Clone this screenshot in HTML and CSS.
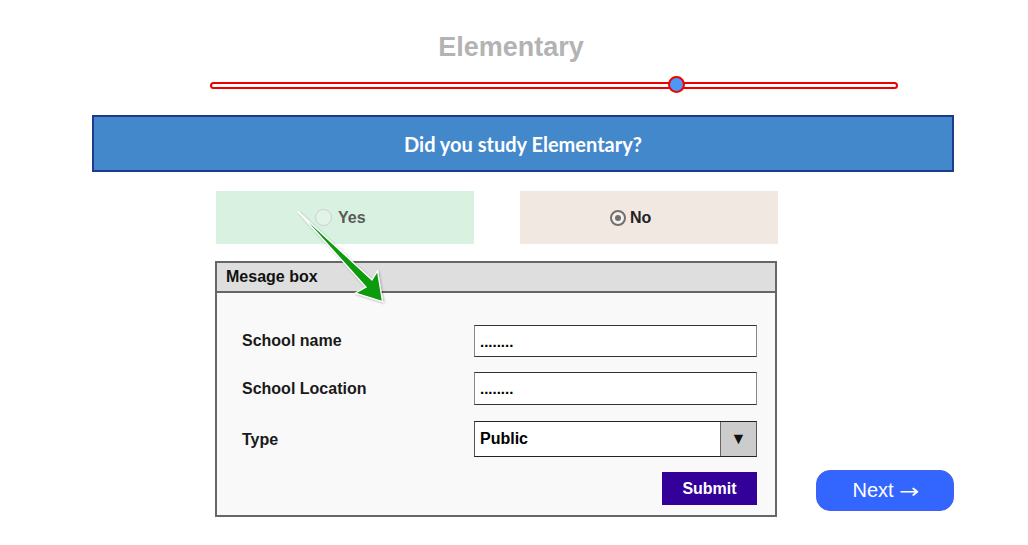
FILE: index.html
```html
<!DOCTYPE html>
<html>
<head>
<meta charset="utf-8">
<link rel="stylesheet" href="styles.css">
</head>
<body>
<div class="page">
  <h1 class="title">Elementary</h1>
  <div class="slider"><span class="thumb"></span></div>
  <div class="banner">Did you study Elementary?</div>
  <div class="choices">
    <div class="choice yes"><span class="radio"></span><span class="label">Yes</span></div>
    <div class="choice no"><span class="radio checked"></span><span class="label">No</span></div>
  </div>
  <div class="lower">
    <div class="msgbox">
      <div class="msghead">Mesage box</div>
      <div class="msgbody">
        <div class="flabel">School name</div>
        <div class="input">........</div>
        <div class="flabel">School Location</div>
        <div class="input">........</div>
        <div class="flabel type">Type</div>
        <div class="select"><span class="sval">Public</span><span class="sbtn">▼</span></div>
        <div class="submit">Submit</div>
      </div>
    </div>
    <div class="next">Next <span class="arr">→</span></div>
  </div>
  <svg class="arrow" width="1028" height="545" viewBox="0 0 1028 545">
    <defs>
      <filter id="sh" x="-20%" y="-20%" width="140%" height="140%">
        <feDropShadow dx="1" dy="1" stdDeviation="1.2" flood-color="#000" flood-opacity="0.3"/>
      </filter>
    </defs>
    <polygon filter="url(#sh)" points="298,211.5 372,280 377.5,271 382.5,301.5 355.5,293 366,287" fill="#0b9a0b" stroke="#ffffff" stroke-width="1.3" stroke-linejoin="miter"/>
  </svg>
</div>
</body>
</html>
```

FILE: styles.css
```css
html, body {
  margin: 0;
  padding: 0;
  background: #ffffff;
}
.page {
  position: relative;
  width: 1028px;
  height: 545px;
  font-family: "Liberation Sans", Arial, sans-serif;
  overflow: hidden;
}
.title {
  margin: 0;
  padding-top: 32px;
  width: 1022px;
  text-align: center;
  font-size: 27px;
  line-height: 30px;
  font-weight: bold;
  color: #b3b3b3;
}
.slider {
  position: relative;
  margin: 20px 0 0 210px;
  width: 684px;
  height: 3px;
  border: 2px solid #ee0000;
  border-radius: 5px;
  background: #fff;
}
.thumb {
  position: absolute;
  left: 456px;
  top: -8px;
  width: 13px;
  height: 13px;
  border: 2px solid #ee0000;
  border-radius: 50%;
  background: #4f97f5;
}
.banner {
  margin: 26px 0 0 92px;
  width: 858px;
  height: 53px;
  border: 2px solid #1d3a8c;
  background: #4488cc;
  color: #fff;
  font-family: Lato, "Open Sans", sans-serif;
  font-weight: bold;
  font-size: 20px;
  display: flex;
  align-items: center;
  justify-content: center;
}
.choices {
  display: flex;
  gap: 46px;
  margin: 19px 0 0 216px;
}
.choice {
  width: 258px;
  height: 53px;
  box-sizing: border-box;
  display: flex;
  align-items: center;
  font-weight: bold;
  font-size: 16px;
}
.yes {
  background: #d8f1e0;
  color: #5a5a5a;
  padding-left: 99px;
}
.no {
  background: #f1e8e2;
  color: #222;
  padding-left: 90px;
}
.radio {
  width: 17px;
  height: 17px;
  border-radius: 50%;
  border: 1px solid #cfcfcf;
  background: #e2f4e8;
  margin-right: 6px;
  box-sizing: border-box;
  position: relative;
}
.radio.checked {
  width: 16px;
  height: 16px;
  border: 2px solid #707070;
  background: #f5f0ec;
  margin-right: 4px;
}
.radio.checked::after {
  content: "";
  position: absolute;
  left: 3px;
  top: 3px;
  width: 6px;
  height: 6px;
  border-radius: 50%;
  background: #707070;
}
.lower {
  display: flex;
  align-items: flex-end;
  margin: 17px 0 0 215px;
}
.msgbox {
  width: 558px;
  border: 2px solid #666666;
  background: #f9f9f9;
}
.msghead {
  height: 28px;
  background: #dedede;
  border-bottom: 2px solid #666666;
  display: flex;
  align-items: center;
  padding-left: 9px;
  font-weight: bold;
  font-size: 16px;
  color: #111;
}
.msgbody {
  display: grid;
  grid-template-columns: 232px 283px;
  grid-template-rows: 32px 33px 37px 33px;
  row-gap: 15px;
  padding: 32px 0 10px 25px;
}
.flabel {
  display: flex;
  align-items: center;
  font-weight: bold;
  font-size: 16px;
  color: #1a1a1a;
}
.flabel.type {
  padding-top: 2px;
}
.input {
  box-sizing: border-box;
  background: #fff;
  border: 1px solid #888;
  border-top-color: #333;
  border-bottom-color: #333;
  display: flex;
  align-items: center;
  padding-left: 5px;
  font-size: 15px;
  font-weight: bold;
  color: #000;
}
.select {
  box-sizing: border-box;
  height: 36px;
  align-self: end;
  background: #fff;
  border: 1px solid #555;
  border-top-color: #222;
  border-bottom-color: #222;
  display: flex;
  align-items: stretch;
  font-weight: bold;
  font-size: 16px;
}
.sval {
  flex: 1;
  display: flex;
  align-items: center;
  padding-left: 5px;
}
.sbtn {
  width: 35px;
  background: #cccccc;
  border-left: 1px solid #666;
  display: flex;
  align-items: center;
  justify-content: center;
  font-size: 16px;
  color: #111;
}
.submit {
  grid-column: 2;
  justify-self: end;
  width: 95px;
  background: #330099;
  color: #fff;
  font-weight: bold;
  font-size: 16px;
  display: flex;
  align-items: center;
  justify-content: center;
}
.next {
  margin: 0 0 6px 39px;
  width: 136px;
  height: 39px;
  box-sizing: content-box;
  border: 1px solid #4a5ef0;
  border-radius: 14px;
  background: #3366ff;
  color: #fff;
  font-size: 20px;
  display: flex;
  align-items: center;
  justify-content: center;
  gap: 5px;
}
.arr {
  display: inline-block;
  font-family: "DejaVu Sans", sans-serif;
  font-size: 20px;
  transform: scaleX(1.2);
  margin-left: 2px;
}
.arrow {
  position: absolute;
  left: 0;
  top: 0;
  pointer-events: none;
}
```
